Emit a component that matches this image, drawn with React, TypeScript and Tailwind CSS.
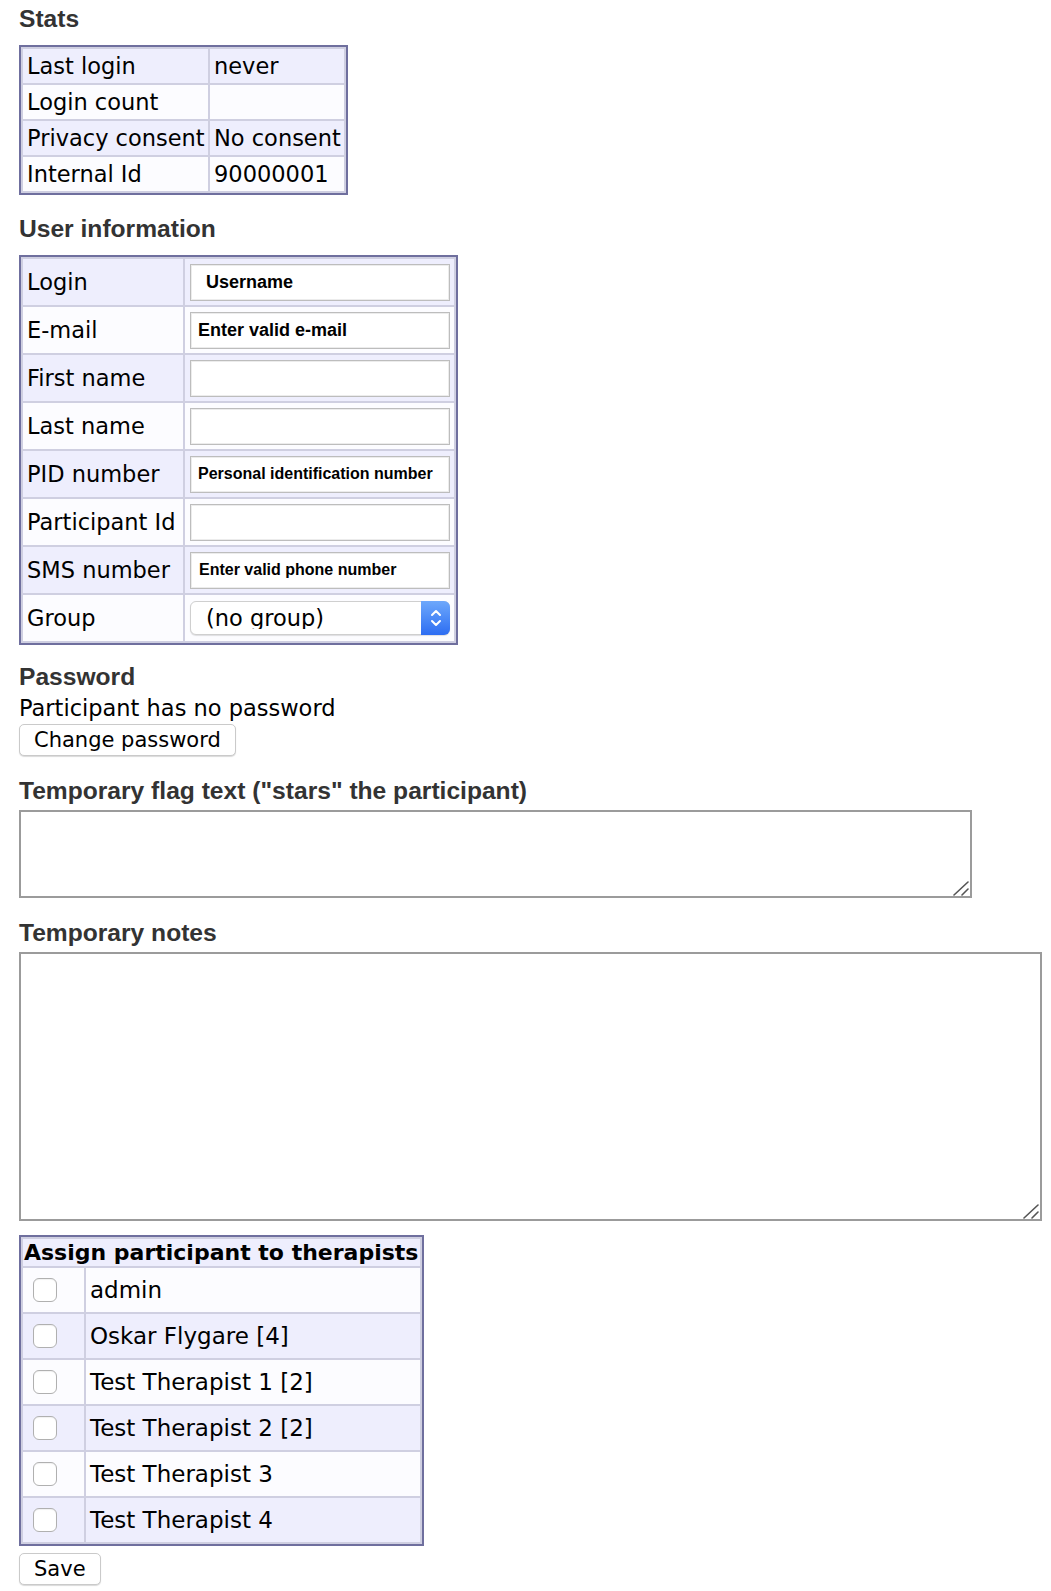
import React from 'react';

const heading = 'font-["Liberation_Sans",Arial,sans-serif] font-bold text-[24.6px] leading-[28px] text-[#333]';
const body = 'font-["DejaVu_Sans",Verdana,sans-serif]';
const lav = 'bg-[#eeeefd]';
const wht = 'bg-[#fcfcff]';
const tableCls = 'border-separate border-spacing-[2px] border-2 border-[#6f6f9e] bg-[#cfcfe1]';

const stats = [
  ['Last login', 'never'],
  ['Login count', ''],
  ['Privacy consent', 'No consent'],
  ['Internal Id', '90000001'],
];

const userRows: { label: string; value: string; size: string; pad: string }[] = [
  { label: 'Login', value: 'Username', size: 'text-[18px]', pad: 'pl-[15px]' },
  { label: 'E-mail', value: 'Enter valid e-mail', size: 'text-[18px]', pad: 'pl-[7px]' },
  { label: 'First name', value: '', size: 'text-[18px]', pad: 'pl-[7px]' },
  { label: 'Last name', value: '', size: 'text-[18px]', pad: 'pl-[7px]' },
  { label: 'PID number', value: 'Personal identification number', size: 'text-[16px]', pad: 'pl-[7px]' },
  { label: 'Participant Id', value: '', size: 'text-[18px]', pad: 'pl-[7px]' },
  { label: 'SMS number', value: 'Enter valid phone number', size: 'text-[16px]', pad: 'pl-[8px]' },
];

const therapists = [
  'admin',
  'Oskar Flygare [4]',
  'Test Therapist 1 [2]',
  'Test Therapist 2 [2]',
  'Test Therapist 3',
  'Test Therapist 4',
];

function Stepper() {
  return (
    <span className="pointer-events-none absolute right-0 top-0 bottom-0 w-[29px] rounded-r-[6px] bg-gradient-to-b from-[#6ea8fb] to-[#2d6cf2] flex items-center justify-center">
      <svg width="14" height="22" viewBox="0 0 14 22" fill="none" stroke="white" strokeWidth="2" strokeLinecap="round" strokeLinejoin="round">
        <path d="M3 8 L7 4 L11 8" />
        <path d="M3 14 L7 18 L11 14" />
      </svg>
    </span>
  );
}

// resize grip drawn over the textarea corner
function Grip() {
  return (
    <svg
      className="pointer-events-none absolute right-[2px] bottom-[2px]"
      width="18"
      height="16"
      viewBox="0 0 18 16"
      stroke="#555"
      strokeWidth="1.6"
      strokeLinecap="round"
    >
      <path d="M2 15 L16 2" />
      <path d="M10 15 L16 9" />
    </svg>
  );
}

export default function App() {
  return (
    <div className={`${body} bg-white text-black pl-[19px] pt-[5px] pb-[10px] min-h-[1591px]`}>
      {/* Stats */}
      <h2 className={heading}>Stats</h2>
      <table className={`${tableCls} mt-[12px] text-[22.5px]`}>
        <tbody>
          {stats.map(([k, v], i) => (
            <tr key={k} className={i % 2 === 0 ? lav : wht}>
              <td className="w-[185px] h-[34px] pl-[4px] pr-[3px] leading-none whitespace-nowrap">{k}</td>
              <td className="w-[134px] h-[34px] pl-[4px] pr-[2px] leading-none whitespace-nowrap">{v}</td>
            </tr>
          ))}
        </tbody>
      </table>

      {/* User information */}
      <h2 className={`${heading} mt-[20px]`}>User information</h2>
      <table className={`${tableCls} mt-[12px] text-[22.5px]`}>
        <tbody>
          {userRows.map((r, i) => (
            <tr key={r.label} className={i % 2 === 0 ? lav : wht}>
              <td className="w-[160px] h-[46px] pl-[4px] pr-[3px] leading-none whitespace-nowrap">{r.label}</td>
              <td className="w-[269px] h-[46px] pl-[5px] pr-0">
                <input
                  type="text"
                  defaultValue={r.value}
                  className={`w-[260px] h-[37px] border border-[#bdbdbd] shadow-[inset_0_0_0_1px_#ececec] bg-white ${r.pad} font-["Liberation_Sans",Arial,sans-serif] font-bold ${r.size} text-black outline-none`}
                />
              </td>
            </tr>
          ))}
          <tr className={wht}>
            <td className="w-[160px] h-[46px] pl-[4px] pr-[3px] leading-none">Group</td>
            <td className="w-[269px] h-[46px] pl-[5px] pr-0">
              <div className="relative w-[260px] h-[34px]">
                <select className="appearance-none w-full h-full rounded-[6px] border border-[#cfcfcf] bg-white shadow-[0_1px_1px_rgba(0,0,0,0.12)] pl-[15px] text-[22.5px] leading-none text-black outline-none">
                  <option>(no group)</option>
                </select>
                <Stepper />
              </div>
            </td>
          </tr>
        </tbody>
      </table>

      {/* Password */}
      <h2 className={`${heading} mt-[18px]`}>Password</h2>
      <p className="mt-[4px] text-[22.5px] leading-[26px]">Participant has no password</p>
      <button className="mt-[3px] h-[32px] px-[14px] rounded-[5px] border border-[#cacaca] bg-white shadow-[0_1px_1px_rgba(0,0,0,0.15)] text-[21px] leading-none text-black">
        Change password
      </button>

      {/* Flag */}
      <h2 className={`${heading} mt-[21px]`}>Temporary flag text ("stars" the participant)</h2>
      <div className="relative mt-[5px] w-[953px]">
        <textarea className="block w-[953px] h-[88px] border-2 border-[#9b9b9b] bg-white outline-none resize-none" />
        <Grip />
      </div>

      {/* Notes */}
      <h2 className={`${heading} mt-[21px]`}>Temporary notes</h2>
      <div className="relative mt-[5px] w-[1023px]">
        <textarea className="block w-[1023px] h-[269px] border-2 border-[#9b9b9b] bg-white outline-none resize-none" />
        <Grip />
      </div>

      {/* Therapists */}
      <table className={`${tableCls} mt-[14px] w-[405px]`}>
        <thead>
          <tr className={lav}>
            <th colSpan={2} className="h-[27px] px-[1px] text-left font-bold text-[22px] leading-none whitespace-nowrap">
              Assign participant to therapists
            </th>
          </tr>
        </thead>
        <tbody>
          {therapists.map((t, i) => (
            <tr key={t} className={i % 2 === 0 ? wht : lav}>
              <td className="w-[61px] h-[44px] pl-[10px]">
                <input
                  type="checkbox"
                  className="appearance-none block w-[24px] h-[24px] rounded-[6px] border border-[#b0b0b0] bg-white shadow-[inset_0_1px_1px_rgba(0,0,0,0.06)]"
                />
              </td>
              <td className="h-[44px] pl-[4px] pr-[2px] text-[23px] leading-none whitespace-nowrap">{t}</td>
            </tr>
          ))}
        </tbody>
      </table>

      <button className="block mt-[7px] h-[32px] px-[14px] rounded-[5px] border border-[#cacaca] bg-white shadow-[0_1px_1px_rgba(0,0,0,0.15)] text-[21px] leading-none text-black">
        Save
      </button>
    </div>
  );
}
